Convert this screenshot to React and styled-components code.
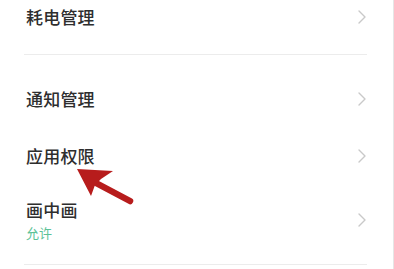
import React from 'react'
import styled, { createGlobalStyle } from 'styled-components'

const GlobalStyle = createGlobalStyle`
  html, body {
    margin: 0;
    padding: 0;
    background: #fff;
  }
  body {
    font-family: "Noto Sans CJK SC", "Noto Sans", sans-serif;
  }
`

const Screen = styled.div`
  position: relative;
  width: 393px;
  height: 269px;
  overflow: hidden;
  background: #fff;
  border-right: 1px solid #e6e6e6;
`

const Row = styled.div`
  display: flex;
  align-items: center;
  justify-content: space-between;
  padding: ${p => p.$pad || '0'};
  padding-left: 26px;
  padding-right: 26px;
  height: ${p => (p.$height ? `${p.$height}px` : 'auto')};
  box-sizing: border-box;
`

const Texts = styled.div`
  display: flex;
  flex-direction: column;
`

const Title = styled.div`
  font-size: 17px;
  line-height: 24px;
  font-weight: 500;
  color: #2e2e2e;
  letter-spacing: 0.2px;
`

const Sub = styled.div`
  font-size: 13px;
  line-height: 18px;
  color: #5cc297;
  margin-top: 2px;
`

const Divider = styled.div`
  height: 1px;
  margin: 0 26px 0 24px;
  background: #ececec;
`

const Gap = styled.div`
  height: ${p => p.$h}px;
`

// red annotation arrow laid over the list
const Overlay = styled.svg`
  position: absolute;
  left: 0;
  top: 0;
  pointer-events: none;
`

function Chevron() {
  return (
    <svg width="10" height="16" viewBox="0 0 10 16">
      <path d="M2 2 L8 8 L2 14" fill="none" stroke="#c9c9c9" strokeWidth="1.4" strokeLinecap="round" strokeLinejoin="round" />
    </svg>
  )
}

function Item({ title, sub, height, pad }) {
  return (
    <Row $height={height} $pad={pad}>
      <Texts>
        <Title>{title}</Title>
        {sub && <Sub>{sub}</Sub>}
      </Texts>
      <Chevron />
    </Row>
  )
}

export default function App() {
  return (
    <>
      <GlobalStyle />
      <Screen>
        <Item title="耗电管理" pad="3px 0 0" height={30} />
        <Gap $h={24} />
        <Divider />
        <Gap $h={15} />
        <Item title="通知管理" height={57} />
        <Item title="应用权限" height={57} />
        <Item title="画中画" sub="允许" pad="14px 0 22px" />
        <Divider />
        <Overlay width="394" height="269" viewBox="0 0 394 269">
          <line x1="96" y1="183" x2="130" y2="201" stroke="#b71c1c" strokeWidth="6.5" strokeLinecap="round" />
          <polygon points="77,169 113,171 101,179 95,185 91,196" fill="#b71c1c" />
        </Overlay>
      </Screen>
    </>
  )
}
